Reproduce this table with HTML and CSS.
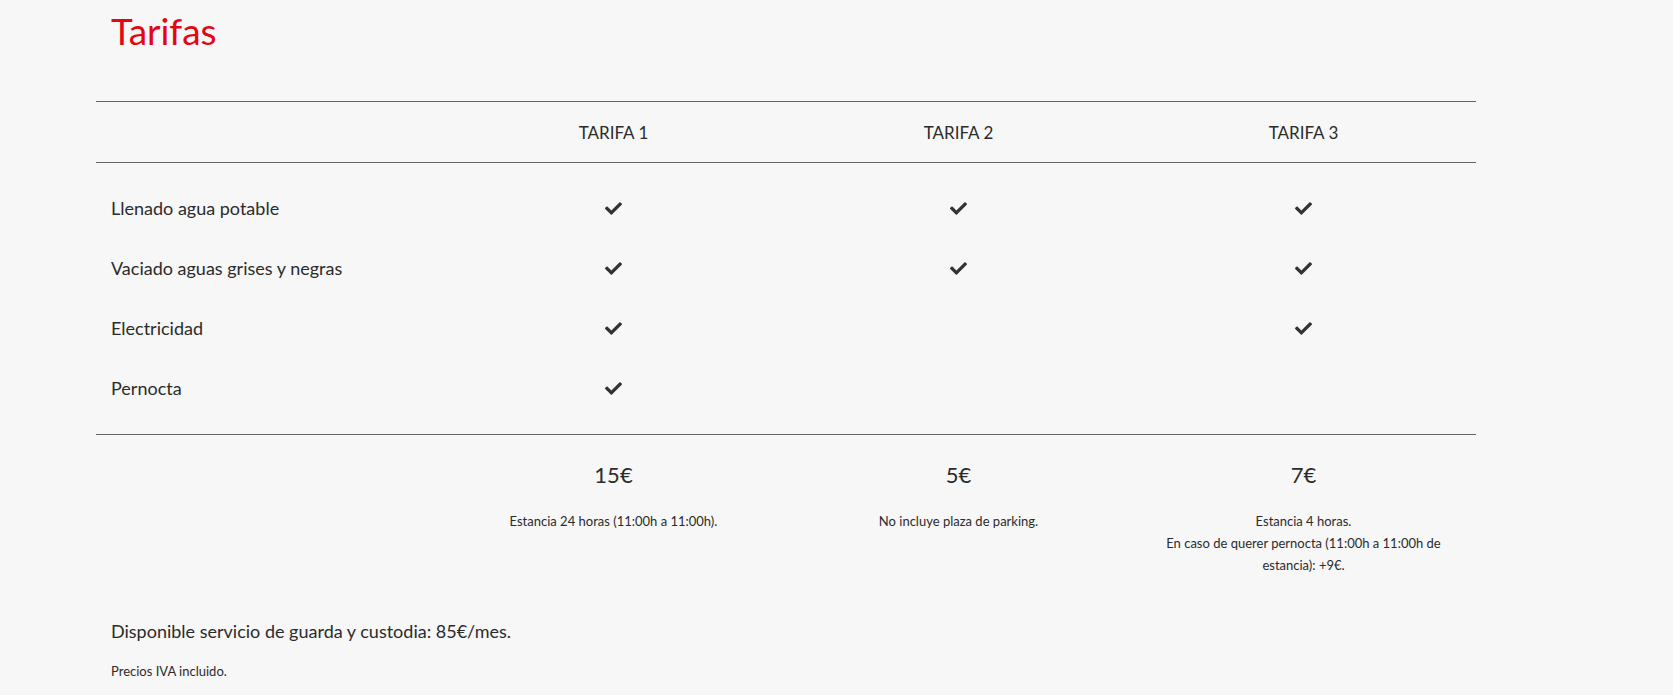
FILE: index.html
```html
<!DOCTYPE html>
<html lang="es">
<head>
<meta charset="utf-8">
<title>Tarifas</title>
<link rel="stylesheet" href="styles.css">
</head>
<body>
<main class="page">
  <h1 class="title">Tarifas</h1>
  <div class="table">
    <div class="row head">
      <div class="cell label"></div>
      <div class="cell">TARIFA 1</div>
      <div class="cell">TARIFA 2</div>
      <div class="cell">TARIFA 3</div>
    </div>
    <div class="body">
      <div class="row feature">
        <div class="cell label">Llenado agua potable</div>
        <div class="cell"><svg class="check" viewBox="0 0 512 512"><path d="M173.9 439.4l-166.4-166.4c-10-10-10-26.2 0-36.2l36.2-36.2c10-10 26.2-10 36.2 0L192 312.7 432.1 72.6c10-10 26.2-10 36.2 0l36.2 36.2c10 10 10 26.2 0 36.2l-294.4 294.4c-10 10-26.2 10-36.2 0z"/></svg></div>
        <div class="cell"><svg class="check" viewBox="0 0 512 512"><path d="M173.9 439.4l-166.4-166.4c-10-10-10-26.2 0-36.2l36.2-36.2c10-10 26.2-10 36.2 0L192 312.7 432.1 72.6c10-10 26.2-10 36.2 0l36.2 36.2c10 10 10 26.2 0 36.2l-294.4 294.4c-10 10-26.2 10-36.2 0z"/></svg></div>
        <div class="cell"><svg class="check" viewBox="0 0 512 512"><path d="M173.9 439.4l-166.4-166.4c-10-10-10-26.2 0-36.2l36.2-36.2c10-10 26.2-10 36.2 0L192 312.7 432.1 72.6c10-10 26.2-10 36.2 0l36.2 36.2c10 10 10 26.2 0 36.2l-294.4 294.4c-10 10-26.2 10-36.2 0z"/></svg></div>
      </div>
      <div class="row feature">
        <div class="cell label">Vaciado aguas grises y negras</div>
        <div class="cell"><svg class="check" viewBox="0 0 512 512"><path d="M173.9 439.4l-166.4-166.4c-10-10-10-26.2 0-36.2l36.2-36.2c10-10 26.2-10 36.2 0L192 312.7 432.1 72.6c10-10 26.2-10 36.2 0l36.2 36.2c10 10 10 26.2 0 36.2l-294.4 294.4c-10 10-26.2 10-36.2 0z"/></svg></div>
        <div class="cell"><svg class="check" viewBox="0 0 512 512"><path d="M173.9 439.4l-166.4-166.4c-10-10-10-26.2 0-36.2l36.2-36.2c10-10 26.2-10 36.2 0L192 312.7 432.1 72.6c10-10 26.2-10 36.2 0l36.2 36.2c10 10 10 26.2 0 36.2l-294.4 294.4c-10 10-26.2 10-36.2 0z"/></svg></div>
        <div class="cell"><svg class="check" viewBox="0 0 512 512"><path d="M173.9 439.4l-166.4-166.4c-10-10-10-26.2 0-36.2l36.2-36.2c10-10 26.2-10 36.2 0L192 312.7 432.1 72.6c10-10 26.2-10 36.2 0l36.2 36.2c10 10 10 26.2 0 36.2l-294.4 294.4c-10 10-26.2 10-36.2 0z"/></svg></div>
      </div>
      <div class="row feature">
        <div class="cell label">Electricidad</div>
        <div class="cell"><svg class="check" viewBox="0 0 512 512"><path d="M173.9 439.4l-166.4-166.4c-10-10-10-26.2 0-36.2l36.2-36.2c10-10 26.2-10 36.2 0L192 312.7 432.1 72.6c10-10 26.2-10 36.2 0l36.2 36.2c10 10 10 26.2 0 36.2l-294.4 294.4c-10 10-26.2 10-36.2 0z"/></svg></div>
        <div class="cell"></div>
        <div class="cell"><svg class="check" viewBox="0 0 512 512"><path d="M173.9 439.4l-166.4-166.4c-10-10-10-26.2 0-36.2l36.2-36.2c10-10 26.2-10 36.2 0L192 312.7 432.1 72.6c10-10 26.2-10 36.2 0l36.2 36.2c10 10 10 26.2 0 36.2l-294.4 294.4c-10 10-26.2 10-36.2 0z"/></svg></div>
      </div>
      <div class="row feature">
        <div class="cell label">Pernocta</div>
        <div class="cell"><svg class="check" viewBox="0 0 512 512"><path d="M173.9 439.4l-166.4-166.4c-10-10-10-26.2 0-36.2l36.2-36.2c10-10 26.2-10 36.2 0L192 312.7 432.1 72.6c10-10 26.2-10 36.2 0l36.2 36.2c10 10 10 26.2 0 36.2l-294.4 294.4c-10 10-26.2 10-36.2 0z"/></svg></div>
        <div class="cell"></div>
        <div class="cell"></div>
      </div>
    </div>
    <div class="row prices">
      <div class="cell label"></div>
      <div class="cell">
        <div class="price">15€</div>
        <p class="note">Estancia 24 horas (11:00h a 11:00h).</p>
      </div>
      <div class="cell">
        <div class="price">5€</div>
        <p class="note">No incluye plaza de parking.</p>
      </div>
      <div class="cell">
        <div class="price">7€</div>
        <p class="note">Estancia 4 horas.<br>En caso de querer pernocta (11:00h a 11:00h de estancia): +9€.</p>
      </div>
    </div>
  </div>
  <p class="extra">Disponible servicio de guarda y custodia: 85€/mes.</p>
  <p class="small">Precios IVA incluido.</p>
</main>
</body>
</html>
```

FILE: styles.css
```css
html, body {
  margin: 0;
  padding: 0;
  background: #f7f7f7;
}
body {
  font-family: Lato, "Liberation Sans", sans-serif;
  color: #2b2b2b;
}
.page {
  width: 1380px;
  margin-left: 96px;
}
.title {
  margin: 0;
  padding: 9px 15px 0;
  height: 101px;
  box-sizing: border-box;
  font-size: 37px;
  font-weight: 400;
  color: #e30613;
  line-height: 44px;
}
.table {
  border-top: 1px solid #666;
}
.row {
  display: grid;
  grid-template-columns: repeat(4, 345px);
}
.cell {
  padding: 0 15px;
  text-align: center;
}
.cell.label {
  text-align: left;
}
.head {
  height: 60px;
  align-items: center;
  font-size: 17px;
  border-bottom: 1px solid #666;
}
.body {
  padding: 15px 0 16px;
  border-bottom: 1px solid #666;
}
.feature {
  height: 60px;
  align-items: center;
  font-size: 18px;
}
.feature .cell {
  display: flex;
  align-items: center;
}
.feature .cell:not(.label) {
  justify-content: center;
}
.check {
  width: 17px;
  height: 17px;
  fill: #333;
}
.prices {
  padding-top: 26px;
}
.price {
  font-size: 22px;
  line-height: 28px;
}
.note {
  margin: 21px 0 0;
  font-size: 13px;
  line-height: 22px;
}
.extra {
  margin: 42px 0 0;
  padding: 0 15px;
  font-size: 18px;
  line-height: 26px;
}
.small {
  margin: 18px 0 0;
  padding: 0 15px;
  font-size: 13px;
  line-height: 18px;
}
```
